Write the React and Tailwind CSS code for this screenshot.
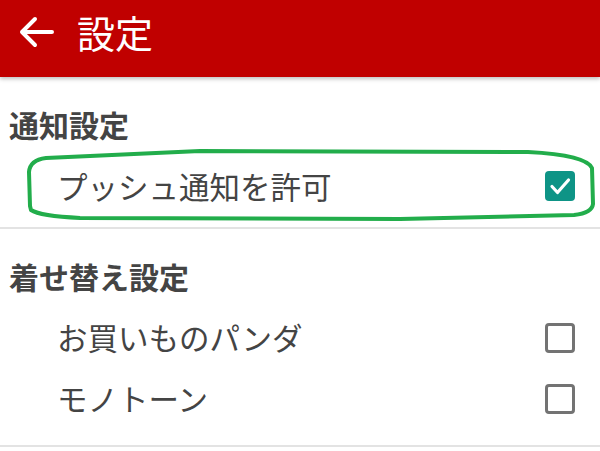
import { useState } from 'react';

const font = { fontFamily: '"Noto Sans CJK JP", "Noto Sans", sans-serif' };

function CheckBox({ checked }) {
  if (checked) {
    return (
      <span className="w-[30px] h-[30px] rounded-[4px] bg-[#0e9486] flex items-center justify-center">
        <svg width="30" height="30" viewBox="0 0 30 30" fill="none">
          <path d="M7 15.5l5.5 6L23.5 9" stroke="#fff" strokeWidth="3.2" strokeLinecap="round" strokeLinejoin="round" />
        </svg>
      </span>
    );
  }
  return <span className="w-[30px] h-[30px] rounded-[4px] border-[3px] border-[#737373] bg-white" />;
}

function Row({ label, checked, height, onToggle }) {
  return (
    <button type="button" onClick={onToggle} className={`w-full flex items-center justify-between pl-[57px] pr-[25px] text-left ${height}`}>
      <span className="text-[30.5px] leading-none text-[#444444]">{label}</span>
      <CheckBox checked={checked} />
    </button>
  );
}

function Heading({ children }) {
  return (
    <div className="h-[62px] flex items-center pl-[9px]">
      <span className="text-[30px] leading-none font-bold text-[#444444]">{children}</span>
    </div>
  );
}

export default function App() {
  const [push, setPush] = useState(true);
  const [theme, setTheme] = useState(null);

  return (
    <div className="w-[600px] h-[451px] bg-white overflow-hidden relative" style={font}>
      <header className="h-[77px] bg-[#c00000] shadow-[0_2px_4px_rgba(0,0,0,0.25)] relative z-10">
        <div className="h-[64px] flex items-center">
          <svg className="ml-[12px]" width="48" height="48" viewBox="0 0 48 48" fill="none">
            <path d="M40 24H10M23 11L10 24l13 13" stroke="#fff" strokeWidth="4" strokeLinecap="round" strokeLinejoin="round" />
          </svg>
          <h1 className="ml-[17px] text-[38px] leading-none font-normal text-white">設定</h1>
        </div>
      </header>

      <section className="pt-4 pb-[10px] border-b-2 border-[#e3e3e3] relative">
        <Heading>通知設定</Heading>
        <Row label="プッシュ通知を許可" checked={push} height="h-[62px]" onToggle={() => setPush((p) => !p)} />
        {/* hand-drawn highlight around the push row */}
        <svg className="absolute left-0 top-0 pointer-events-none" width="600" height="150" viewBox="0 77 600 150" fill="none">
          <path
            d="M30 206 L29 172 Q30 160 46 158 L200 151 L528 152 Q586 155 592 168 L593 204 Q592 213 574 215 L400 219 L80 218 Q40 216 31 210 Z"
            stroke="#22ad4b"
            strokeWidth="4"
            strokeLinejoin="round"
          />
        </svg>
      </section>

      <section className="pt-4 pb-4 border-b-2 border-[#e3e3e3]">
        <Heading>着せ替え設定</Heading>
        <Row label="お買いものパンダ" checked={theme === 'panda'} height="h-[61px]" onToggle={() => setTheme((t) => (t === 'panda' ? null : 'panda'))} />
        <Row label="モノトーン" checked={theme === 'mono'} height="h-[61px]" onToggle={() => setTheme((t) => (t === 'mono' ? null : 'mono'))} />
      </section>
    </div>
  );
}
